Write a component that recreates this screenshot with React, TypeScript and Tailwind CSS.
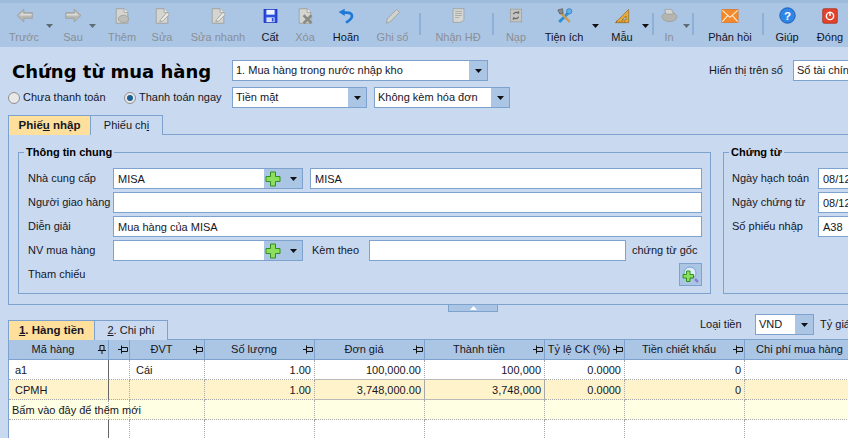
import React from "react";

const Tri = ({ dim = false }: { dim?: boolean }) => (
  <svg width="7" height="4" viewBox="0 0 7 4" className="block">
    <path d="M0 0H7L3.5 4Z" fill={dim ? "#5f6b78" : "#111"} />
  </svg>
);

const Gray = "#b8b8b4";
const GrayD = "#98988f";

const Doc = ({ children }: { children?: React.ReactNode }) => (
  <svg width="16" height="16" viewBox="0 0 22 22">
    <path d="M3 1H14L19 6V21H3Z" fill="#d4d4d0" stroke={GrayD} />
    <path d="M14 1V6H19" fill="#eee" stroke={GrayD} />
    {children}
  </svg>
);

const icons: Record<string, React.ReactNode> = {
  back: (
    <svg width="17" height="15" viewBox="0 0 24 20">
      <path d="M1.5 10L11 1V6H23V14H11V19Z" fill={Gray} stroke={GrayD} />
      <path d="M4.5 10L10 5V8H22V10Z" fill="#dcdcd8" />
    </svg>
  ),
  next: (
    <svg width="17" height="15" viewBox="0 0 24 20">
      <path d="M22.5 10L13 1V6H1V14H13V19Z" fill={Gray} stroke={GrayD} />
      <path d="M19.5 10L14 5V8H2V10Z" fill="#dcdcd8" />
    </svg>
  ),
  add: (
    <Doc>
      <ellipse cx="13" cy="15" rx="7" ry="5" fill="#bdbdb9" stroke={GrayD} />
    </Doc>
  ),
  edit: (
    <Doc>
      <path d="M9 16L18 6L21 9L12 18L8 19Z" fill="#e8e8e4" stroke={GrayD} />
    </Doc>
  ),
  save: (
    <svg width="15" height="16" viewBox="0 0 22 22">
      <rect x="1.5" y="1.5" width="19" height="19" fill="#2b4fe0" stroke="#0a1fb0" />
      <rect x="5" y="2" width="12" height="7" fill="#eef4ff" />
      <rect x="5" y="13" width="12" height="7" fill="#d7e0f5" />
      <rect x="13" y="14" width="2.5" height="5" fill="#2b4fe0" />
    </svg>
  ),
  del: (
    <Doc>
      <path d="M9 10L20 21M20 10L9 21" stroke="#8a8a86" strokeWidth="3.5" />
    </Doc>
  ),
  undo: (
    <svg width="16" height="16" viewBox="0 0 24 22">
      <path d="M9 6H13C18 6 21 8 21 11C21 15 17 18 12 21" fill="none" stroke="#1f78d6" strokeWidth="4" />
      <path d="M1 5L10 0V11Z" fill="#1f78d6" />
    </svg>
  ),
  pen: (
    <svg width="16" height="16" viewBox="0 0 22 22">
      <path d="M2 21L3 15L16 2L20 6L7 19Z" fill="#d2d2ce" stroke={GrayD} />
    </svg>
  ),
  inv: (
    <svg width="15" height="17" viewBox="0 0 22 22">
      <path d="M3 1H19V17L15 21H3Z" fill="#d6d6d2" stroke={GrayD} />
      <path d="M6 5H16M6 8H16M6 11H16M6 14H12" stroke="#9a9a96" />
    </svg>
  ),
  reload: (
    <svg width="14" height="15" viewBox="0 0 22 22">
      <rect x="2" y="1" width="18" height="20" fill="#c4c4c0" stroke={GrayD} />
      <path d="M7 9C8 6 13 5 15 8M15 8V4.5M15 13C14 16 9 17 7 14M7 14V17.5" stroke="#666" strokeWidth="2" fill="none" />
    </svg>
  ),
  tools: (
    <svg width="17" height="16" viewBox="0 0 24 24">
      <path d="M4 21L19 6" stroke="#2f8ed8" strokeWidth="4.5" />
      <circle cx="19" cy="5" r="4" fill="#5db2ea" stroke="#2370b0" />
      <path d="M20 21L6 7" stroke="#c99a4a" strokeWidth="3.5" />
      <path d="M2 3L9 1L10 8L5 9Z" fill="#8a8a8a" stroke="#555" />
    </svg>
  ),
  ruler: (
    <svg width="16" height="16" viewBox="0 0 24 22">
      <path d="M2 21L22 1V21Z" fill="#e0aa3e" stroke="#94651a" />
      <path d="M12 17L18 11V17Z" fill="#abc6e5" stroke="#94651a" />
      <path d="M4 21V18M8 21V19M12 21V18M16 21V19" stroke="#7a5314" />
    </svg>
  ),
  print: (
    <svg width="17" height="15" viewBox="0 0 24 22">
      <ellipse cx="12" cy="13" rx="11" ry="7" fill="#b4b4b0" stroke={GrayD} />
      <path d="M5 2H15L18 9H7Z" fill="#d4d4d0" stroke={GrayD} />
    </svg>
  ),
  mail: (
    <svg width="18" height="14" viewBox="0 0 24 20">
      <rect x="0.5" y="1" width="23" height="18" fill="#f58a2c" stroke="#e06a10" />
      <path d="M1 2L12 12L23 2M1 18L9 9M23 18L15 9" fill="none" stroke="#fff2dc" strokeWidth="1.5" />
    </svg>
  ),
  help: (
    <svg width="17" height="17" viewBox="0 0 22 22">
      <circle cx="11" cy="11" r="10" fill="#2f86e6" stroke="#0f4fa8" />
      <text x="11" y="16.5" textAnchor="middle" fontSize="15" fontWeight="700" fill="#fff" fontFamily="Liberation Sans, sans-serif">?</text>
    </svg>
  ),
  close: (
    <svg width="16" height="16" viewBox="0 0 22 22">
      <rect x="1" y="1" width="20" height="20" rx="2" fill="#e2432d" stroke="#a92714" />
      <circle cx="11" cy="11" r="5" fill="none" stroke="#fff" strokeWidth="2" />
      <path d="M11 5V11" stroke="#fff" strokeWidth="2" />
    </svg>
  ),
};

const TB = ({ w, icon, label, off }: { w: string; icon: string; label: string; off?: boolean }) => (
  <div className={`${w} flex flex-col items-center shrink-0`}>
    <div className="h-[21px] flex items-center justify-center">{icons[icon]}</div>
    <div className={`mt-[4px] leading-[14px] whitespace-nowrap ${off ? "text-[#8b8f94]" : "text-[#14141e]"}`}>{label}</div>
  </div>
);

const Drop = ({ cls = "", dim }: { cls?: string; dim?: boolean }) => (
  <div className={`w-[6px] shrink-0 flex justify-center pt-[19px] ${cls}`}>
    <div className="shrink-0"><Tri dim={dim} /></div>
  </div>
);

const Sep = ({ cls = "" }: { cls?: string }) => (
  <div className={`w-[2px] shrink-0 h-[22px] mt-[8px] bg-[#8fb0d6] ${cls}`} />
);

const Toolbar = () => (
  <div className="h-[47px] bg-[#abc6e5] border-t-[3px] border-[#9dbbdb] flex pt-[2px] overflow-hidden">
    <TB w="w-[44px] ml-[2px]" icon="back" label="Trước" off />
    <Drop dim />
    <TB w="w-[32px] ml-[5px]" icon="next" label="Sau" off />
    <Drop dim />
    <TB w="w-[54px]" icon="add" label="Thêm" off />
    <TB w="w-[26px]" icon="edit" label="Sửa" off />
    <TB w="w-[86px]" icon="edit" label="Sửa nhanh" off />
    <TB w="w-[18px]" icon="save" label="Cất" />
    <TB w="w-[52px]" icon="del" label="Xóa" off />
    <TB w="w-[30px]" icon="undo" label="Hoãn" />
    <TB w="w-[53px] ml-[5px]" icon="pen" label="Ghi sổ" off />
    <Sep />
    <TB w="w-[68px] ml-[3px]" icon="inv" label="Nhận HĐ" off />
    <Sep />
    <TB w="w-[44px]" icon="reload" label="Nạp" off />
    <TB w="w-[52px]" icon="tools" label="Tiện ích" />
    <Drop cls="ml-[2px]" />
    <TB w="w-[40px] ml-[4px]" icon="ruler" label="Mẫu" />
    <Drop />
    <Sep cls="ml-[4px]" />
    <TB w="w-[28px] ml-[1px]" icon="print" label="In" off />
    <Drop dim />
    <Sep cls="ml-[3px]" />
    <TB w="w-[64px] ml-[4px]" icon="mail" label="Phản hồi" />
    <Sep />
    <TB w="w-[46px]" icon="help" label="Giúp" />
    <TB w="w-[40px]" icon="close" label="Đóng" />
  </div>
);

const Combo = ({ w, text, btn = "w-[18px]" }: { w: string; text: string; btn?: string }) => (
  <div className={`${w} h-[21px] shrink-0 flex border border-[#7da2ce] bg-white`}>
    <div className="flex-1 pl-[3px] leading-[19px] whitespace-nowrap overflow-hidden">{text}</div>
    <div className={`${btn} shrink-0 bg-[#abc6e5] flex items-center justify-center`}><Tri /></div>
  </div>
);

const Input = ({ w, text = "" }: { w: string; text?: string }) => (
  <div className={`${w} h-[21px] shrink-0 border border-[#7da2ce] bg-white pl-[4px] leading-[20px] whitespace-nowrap overflow-hidden`}>{text}</div>
);

const Plus = () => (
  <svg width="16" height="16" viewBox="0 0 16 16" className="block">
    <path d="M5.5 1H10.5V5.5H15V10.5H10.5V15H5.5V10.5H1V5.5H5.5Z" fill="#8ede5e" stroke="#2f8f1f" />
  </svg>
);

const PlusCombo = ({ text = "" }: { text?: string }) => (
  <div className="w-[190px] h-[21px] shrink-0 flex border border-[#7da2ce] bg-white">
    <div className="flex-1 pl-[4px] leading-[20px]">{text}</div>
    <div className="w-[38px] shrink-0 bg-[#abc6e5] flex items-center pl-[1px]">
      <Plus />
      <div className="ml-[9px]"><Tri /></div>
    </div>
  </div>
);

const Row = ({ label, w = "w-[85px]", children }: { label: string; w?: string; children: React.ReactNode }) => (
  <div className="flex items-center h-[21px] mb-[3px]">
    <div className={`${w} shrink-0 whitespace-nowrap`}>{label}</div>
    {children}
  </div>
);

const Tab = ({ w, active, children }: { w: string; active?: boolean; children: React.ReactNode }) => (
  <div className={`${w} h-full flex items-center justify-center border border-b-0 border-[#7da2ce] -ml-px first:ml-0 whitespace-nowrap ${active ? "bg-[#ffdf9c] font-bold text-[11.5px]" : "bg-[#c9daf0]"}`}>
    {children}
  </div>
);

const Pin = ({ v }: { v?: boolean }) => (
  <svg width="10" height="9" viewBox="0 0 10 9" className="block shrink-0">
    {v ? (
      <path d="M3 0.5H7V5.5H3ZM1 5.5H9M5 5.5V9" fill="none" stroke="#111" />
    ) : (
      <path d="M3.5 2.5H9.5V6.5H3.5ZM3.5 0.5V8.5M0 4.5H3.5" fill="none" stroke="#111" />
    )}
  </svg>
);

const cols = "grid grid-cols-[100px_21px_75px_110px_110px_120px_80px_120px_110px]";

const heads = ["Mã hàng", "", "ĐVT", "Số lượng", "Đơn giá", "Thành tiền", "Tỷ lệ CK (%)", "Tiền chiết khấu", "Chi phí mua hàng"];

const Cell = ({ children, right, solid, bg = "", sel }: { children?: React.ReactNode; right?: boolean; solid?: boolean; bg?: string; sel?: boolean }) => (
  <div
    className={`leading-[20px] whitespace-nowrap border-b border-b-[#a8a8a8] border-r [border-bottom-style:dotted] ${solid ? "border-r-[#666] [border-right-style:solid]" : "border-r-[#a8a8a8] [border-right-style:dotted]"} ${right ? "text-right pr-[3px]" : "pl-[6px]"} ${sel ? "border-t border-t-[#b9b9b9] [border-top-style:solid] [border-bottom-style:solid] border-b-[#b9b9b9] [border-right-style:solid] -mt-px h-[21px]" : "h-[20px]"} ${bg}`}
  >
    {children}
  </div>
);

const GridRow = ({ v, bg, sel }: { v: string[]; bg: string; sel?: boolean }) => (
  <>
    {v.map((t, i) => (
      <Cell key={i} right={i >= 3 && i <= 7} solid={i === 0} bg={bg} sel={sel && (i === 4 || i === 5)}>
        {t}
      </Cell>
    ))}
  </>
);

export default function App() {
  return (
    <div
      className="w-[848px] h-[438px] overflow-hidden bg-[#c9daf0] text-[11px] text-[#16161f]"
      style={{ fontFamily: '"Liberation Sans", Arial, sans-serif' }}
    >
      <Toolbar />

      <div className="flex mt-[13px] w-[910px]">
        <div className="w-[232px] shrink-0 pl-[12px] h-[21px] leading-[24px] text-[18px] font-bold text-black whitespace-nowrap" style={{ fontFamily: '"DejaVu Sans", sans-serif' }}>
          Chứng từ mua hàng
        </div>
        <Combo w="w-[256px]" text="1. Mua hàng trong nước nhập kho" />
        <div className="ml-[221px] w-[84px] shrink-0 leading-[21px] whitespace-nowrap">Hiển thị trên sổ</div>
        <Combo w="w-[110px]" text="Sổ tài chính" />
      </div>

      <div className="flex mt-[6px] h-[21px] items-center">
        <div className="w-[232px] shrink-0 pl-[8px] flex items-center">
          <div className="w-[12px] h-[12px] rounded-full border border-[#8f8f8f] bg-[#e8e8e8] shrink-0" />
          <div className="ml-[3px] w-[101px] whitespace-nowrap">Chưa thanh toán</div>
          <div className="w-[12px] h-[12px] rounded-full border border-[#8f8f8f] bg-[#e8e8e8] shrink-0 flex items-center justify-center">
            <div className="w-[6px] h-[6px] rounded-full bg-[#1c5f94]" />
          </div>
          <div className="ml-[3px] whitespace-nowrap">Thanh toán ngay</div>
        </div>
        <Combo w="w-[135px]" text="Tiền mặt" />
        <div className="ml-[7px]"><Combo w="w-[136px]" text="Không kèm hóa đơn" /></div>
      </div>

      <div className="flex h-[20px] mt-[7px] ml-[8px]">
        <Tab w="w-[83px]" active>
          <span>Phiế<u>u</u> nhập</span>
        </Tab>
        <Tab w="w-[73px]">
          <span>Phiếu ch<u>i</u></span>
        </Tab>
      </div>

      <div className="ml-[8px] w-[860px] h-[171px] border-t border-l border-b border-[#7da2ce] flex px-[9px] pt-[10px] -mt-px">
        <fieldset className="w-[693px] min-w-0 h-[149px] shrink-0 border border-[#7da2ce]">
          <legend className="ml-[5px] px-[2px] font-bold leading-[15px] text-black">Thông tin chung</legend>
          <div className="pt-[8px] pl-[9px] pr-[8px]">
            <Row label="Nhà cung cấp">
              <PlusCombo text="MISA" />
              <div className="ml-[7px]"><Input w="w-[392px]" text="MISA" /></div>
            </Row>
            <Row label="Người giao hàng"><Input w="w-[589px]" /></Row>
            <Row label="Diễn giải"><Input w="w-[589px]" text="Mua hàng của MISA" /></Row>
            <Row label="NV mua hàng">
              <PlusCombo />
              <div className="ml-[9px] w-[57px] whitespace-nowrap">Kèm theo</div>
              <Input w="w-[257px]" />
              <div className="ml-[6px] whitespace-nowrap">chứng từ gốc</div>
            </Row>
            <div className="flex items-center justify-between h-[23px] -mt-px">
              <div>Tham chiếu</div>
              <div className="w-[23px] h-[23px] shrink-0 border border-[#7da2ce] bg-[#abc6e5] flex items-center justify-center">
                <svg width="17" height="17" viewBox="0 0 17 17">
                  <circle cx="8" cy="7" r="6" fill="#dcebf8" stroke="#7da2ce" />
                  <path d="M13 13L16 16" stroke="#8d7fd0" strokeWidth="2.5" />
                  <path d="M4.5 5H8V8.5H11.5V12H8V15.5H4.5V12H1V8.5H4.5Z" fill="#8ede5e" stroke="#2f8f1f" />
                </svg>
              </div>
            </div>
          </div>
        </fieldset>
        <fieldset className="ml-[12px] w-[200px] min-w-0 h-[149px] shrink-0 border border-[#7da2ce]">
          <legend className="ml-[5px] px-[2px] font-bold leading-[15px] text-black">Chứng từ</legend>
          <div className="pt-[8px] pl-[8px]">
            <Row label="Ngày hạch toán" w="w-[86px]"><Input w="w-[90px]" text="08/12/2015" /></Row>
            <Row label="Ngày chứng từ" w="w-[86px]"><Input w="w-[90px]" text="08/12/2015" /></Row>
            <Row label="Số phiếu nhập" w="w-[86px]"><Input w="w-[90px]" text="A38" /></Row>
          </div>
        </fieldset>
      </div>

      <div className="flex justify-center w-[946px] h-0">
        <div className="w-[50px] h-[8px] shrink-0 -mt-px border border-[#7da2ce] bg-[#abc6e5] flex justify-center pt-[1px]">
          <svg width="7" height="4" viewBox="0 0 7 4" className="block"><path d="M0 4H7L3.5 0Z" fill="#fff" /></svg>
        </div>
      </div>

      <div className="flex h-[27px] mt-[8px] ml-[8px] w-[860px] justify-between">
        <div className="flex h-[20px] self-end">
          <Tab w="w-[87px]" active><span><u>1</u>. Hàng tiền</span></Tab>
          <Tab w="w-[74px]"><span><u>2</u>. Chi phí</span></Tab>
        </div>
        <div className="flex h-[21px] mt-[1px] items-center">
          <div className="w-[55px] whitespace-nowrap">Loại tiền</div>
          <Combo w="w-[59px]" text="VND" />
          <div className="ml-[6px] w-[34px] whitespace-nowrap">Tỷ giá</div>
          <div className="w-[14px]" />
        </div>
      </div>

      <div className="ml-[8px] w-[860px] border-l border-t border-[#7da2ce] -mt-px">
        <div className={cols}>
          {heads.map((h, i) => (
            <div key={i} className="h-[20px] bg-[#abc6e5] border-r border-b border-[#7da2ce] flex items-center whitespace-nowrap">
              <div className="flex-1 text-center">{h}</div>
              {i < 8 && <div className="pr-[1px]"><Pin v={i === 0} /></div>}
            </div>
          ))}
          <GridRow v={["a1", "", "Cái", "1.00", "100,000.00", "100,000", "0.0000", "0", ""]} bg="bg-white" />
          <GridRow v={["CPMH", "", "", "1.00", "3,748,000.00", "3,748,000", "0.0000", "0", ""]} bg="bg-[#fff3cb]" sel />
          {["Bấm vào đây để thêm mới", "", "", "", "", "", "", "", ""].map((t, i) => (
            <div key={i} className={`h-[20px] leading-[20px] whitespace-nowrap border-b border-r border-dotted border-[#a8a8a8] bg-[#ffffe3] ${i === 0 ? "pl-[3px] relative z-10" : ""}`}>
              {t}
            </div>
          ))}
          <GridRow v={["", "", "", "", "", "", "", "", ""]} bg="bg-white" />
        </div>
      </div>
    </div>
  );
}
